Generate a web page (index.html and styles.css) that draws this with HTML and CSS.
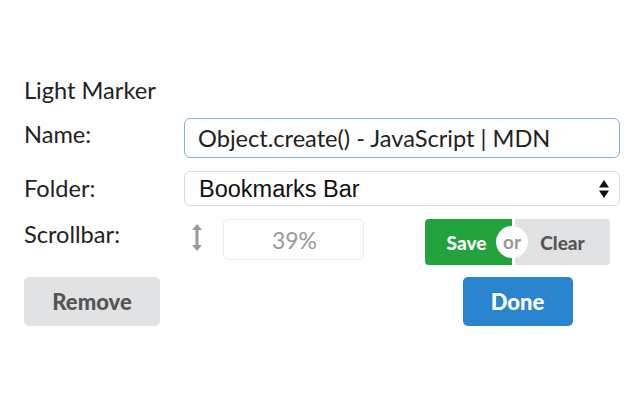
FILE: index.html
```html
<!DOCTYPE html>
<html>
<head>
<meta charset="utf-8">
<link rel="stylesheet" href="styles.css">
</head>
<body>
<div class="panel">
  <div class="title">Light Marker</div>
  <div class="row row-name">
    <label class="label">Name:</label>
    <input class="name-input" type="text" value="Object.create() - JavaScript | MDN">
  </div>
  <div class="row row-folder">
    <label class="label">Folder:</label>
    <div class="select-wrap">
      <select class="folder-select"><option>Bookmarks Bar</option></select>
      <svg class="select-arrows" width="10" height="18" viewBox="0 0 10 18"><path d="M5 0 L10 7.5 L0 7.5 Z M0 10.5 L10 10.5 L5 18 Z" fill="#111"/></svg>
    </div>
  </div>
  <div class="row row-scroll">
    <label class="label">Scrollbar:</label>
    <svg class="scroll-icon" width="12" height="29" viewBox="0 0 12 29"><path d="M6 1 L11 7 L7.5 7 L7.5 22 L11 22 L6 28 L1 22 L4.5 22 L4.5 7 L1 7 Z" fill="#999"/></svg>
    <input class="scroll-input" type="text" value="39%">
    <div class="spacer"></div>
    <div class="save-group">
      <button class="btn-save">Save</button>
      <span class="or">or</span>
      <button class="btn-clear">Clear</button>
    </div>
  </div>
  <div class="row row-buttons">
    <button class="btn-remove">Remove</button>
    <div class="spacer"></div>
    <div class="done-wrap">
      <button class="btn-done">Done</button>
    </div>
  </div>
</div>
</body>
</html>
```
FILE: styles.css
```css
html, body {
  margin: 0;
  padding: 0;
  background: #fff;
}
.panel {
  padding: 76px 20px 0 24px;
  font-family: Lato, "Open Sans", sans-serif;
  color: #222;
}
.title {
  font-size: 23.6px;
  line-height: 28px;
}
.row {
  display: flex;
  align-items: flex-start;
}
.label {
  width: 160px;
  flex: none;
  font-size: 23.6px;
  line-height: 28px;
}
.row-name {
  margin-top: 14px;
}
.row-name .label {
  padding-top: 2px;
}
.name-input {
  flex: 1;
  box-sizing: border-box;
  height: 40px;
  margin: 0;
  border: 1px solid #80b3dd;
  border-radius: 6px;
  padding: 0 12px 0 13px;
  font-family: Lato, sans-serif;
  font-size: 23.6px;
  color: #222;
  outline: none;
}
.row-folder {
  margin-top: 13px;
}
.row-folder .label {
  padding-top: 3px;
}
.select-wrap {
  flex: 1;
  position: relative;
}
.folder-select {
  -webkit-appearance: none;
  appearance: none;
  width: 100%;
  box-sizing: border-box;
  height: 35px;
  margin: 0;
  border: 1px solid #d9d9d9;
  border-radius: 6px;
  background: #fff;
  padding: 0 30px 0 14px;
  font-family: "Liberation Sans", Arial, sans-serif;
  font-size: 23.5px;
  color: #111;
}
.select-arrows {
  position: absolute;
  right: 11px;
  top: 9px;
}
.row-scroll {
  margin-top: 13px;
}
.row-scroll .label {
  padding-top: 1px;
  width: 167px;
}
.scroll-icon {
  margin-top: 4px;
  flex: none;
}
.scroll-input {
  box-sizing: border-box;
  width: 141px;
  height: 41px;
  margin: 0 0 0 20px;
  border: 1px solid #ececec;
  border-radius: 5px;
  padding: 0 46px 0 0;
  text-align: right;
  font-family: Lato, sans-serif;
  font-size: 23px;
  color: #999;
  outline: none;
}
.spacer {
  flex: 1;
}
.save-group {
  position: relative;
  display: flex;
  width: 185px;
  height: 46px;
  margin-right: 10px;
}
.save-group button {
  border: none;
  margin: 0;
  height: 46px;
  padding: 0;
  font-family: Lato, sans-serif;
  font-weight: 900;
  font-size: 19px;
  cursor: pointer;
}
.btn-save {
  width: 87px;
  background: #22a33e;
  color: #fff;
  border-radius: 4px 0 0 4px;
  padding-right: 4px !important;
}
.btn-clear {
  flex: 1;
  margin-left: 3px !important;
  background: #e1e2e4;
  color: #555;
  border-radius: 0 4px 4px 0;
}
.or {
  position: absolute;
  left: 71px;
  top: 7px;
  width: 32px;
  height: 32px;
  border-radius: 50%;
  background: #fff;
  color: #999;
  font-size: 19px;
  font-weight: 700;
  line-height: 31px;
  text-align: center;
}
.row-buttons {
  margin-top: 12px;
}
.row-buttons button {
  border: none;
  margin: 0;
  height: 49px;
  border-radius: 5px;
  font-family: Lato, sans-serif;
  font-weight: 900;
  font-size: 22px;
  cursor: pointer;
}
.btn-remove {
  width: 136px;
  background: #e1e2e4;
  color: #555;
}
.done-wrap {
  width: 185px;
  margin-right: 10px;
  display: flex;
  justify-content: center;
}
.btn-done {
  width: 110px;
  background: #2a85d0;
  color: #fff;
}
```
